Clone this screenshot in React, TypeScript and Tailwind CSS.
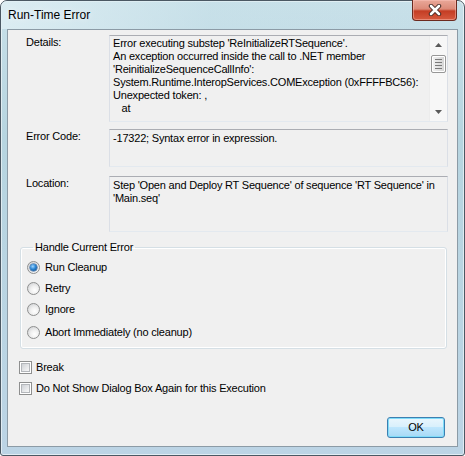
import React from 'react'

const ui = "font-['Liberation_Sans',Arial,sans-serif] text-[11px] leading-[13px] tracking-[-0.2px] text-black"

function Radio({ checked }: { checked?: boolean }): React.ReactElement {
  return (
    <span className="flex h-[13px] w-[13px] shrink-0 items-center justify-center rounded-full border border-[#8e8f8f] bg-[radial-gradient(circle_at_60%_65%,#ffffff_0%,#f0f0f0_40%,#c9cbce_100%)]">
      {checked && (
        <span className="h-[7px] w-[7px] rounded-full bg-[radial-gradient(circle_at_40%_35%,#9fd6ff_0%,#2a84d2_45%,#0d3f78_100%)] shadow-[0_0_0_0.5px_#1c4f8a]" />
      )}
    </span>
  )
}

function Checkbox(): React.ReactElement {
  return (
    <span className="flex h-[13px] w-[13px] shrink-0 items-center justify-center border border-[#8e8f8f] bg-white">
      <span className="h-[9px] w-[9px] border border-[#b4b7bb] bg-[linear-gradient(135deg,#cfd2d6_0%,#e8e9eb_60%,#f7f7f7_100%)]" />
    </span>
  )
}

function ScrollBar(): React.ReactElement {
  return (
    <div className="flex w-[18px] shrink-0 flex-col items-center border-l border-[#ececec] bg-[#f7f7f7] py-[6px]">
      {/* up arrow */}
      <svg width="7" height="4" viewBox="0 0 7 4" className="mt-[1px]">
        <polygon points="0,4 3.5,0 7,4" fill="#5a5a5a" />
      </svg>
      {/* thumb */}
      <div className="mt-[8px] flex h-[18px] w-[15px] flex-col items-center justify-center gap-[2px] rounded-[2px] border border-[#979797] bg-[linear-gradient(90deg,#f4f4f4,#e2e2e2_50%,#d4d4d4)] shadow-[inset_0_0_0_1px_#ffffff]">
        <span className="h-px w-[7px] bg-[#7a7a7a]" />
        <span className="h-px w-[7px] bg-[#7a7a7a]" />
        <span className="h-px w-[7px] bg-[#7a7a7a]" />
        <span className="h-px w-[7px] bg-[#7a7a7a]" />
      </div>
      <div className="flex-1" />
      {/* down arrow */}
      <svg width="7" height="4" viewBox="0 0 7 4" className="mb-[1px]">
        <polygon points="0,0 3.5,4 7,0" fill="#5a5a5a" />
      </svg>
    </div>
  )
}

function Field({
  label,
  height,
  top,
  scroll,
  children,
}: {
  label: string
  height: string
  top: string
  scroll?: boolean
  children: React.ReactNode
}): React.ReactElement {
  return (
    <div className={`flex pr-[9px] ${top}`}>
      <div className="w-[101px] shrink-0 pl-[18px] pt-[1px]">{label}</div>
      <div
        className={`flex flex-1 border border-[#abadb3] border-x-[#dbdfe6] border-b-[#e3e9ef] bg-[#f0f0f0] ${height}`}
      >
        <div className="flex-1 overflow-hidden pl-[3px] pt-[1px]">{children}</div>
        {scroll && <ScrollBar />}
      </div>
    </div>
  )
}

export default function App(): React.ReactElement {
  const options = [
    { label: 'Run Cleanup', checked: true, mt: 'mt-[7px]' },
    { label: 'Retry', checked: false, mt: 'mt-[8px]' },
    { label: 'Ignore', checked: false, mt: 'mt-[8px]' },
    { label: 'Abort Immediately (no cleanup)', checked: false, mt: 'mt-[10px]' },
  ]

  return (
    <div className="h-[456px] w-[465px] bg-white">
      {/* Window frame */}
      <div className="flex h-full w-full flex-col rounded-t-[7px] rounded-b-[3px] border border-[#4b5863] bg-[linear-gradient(180deg,#c8e0e9_0%,#b7d5e0_30%,#bcd4e5_100%)] px-[6px] pb-[8px] shadow-[inset_0_0_0_1px_rgba(255,255,255,0.55)]">
        {/* Title bar */}
        <div className="-mx-[6px] flex h-[28px] items-start justify-between rounded-t-[6px] bg-[linear-gradient(90deg,rgba(225,240,245,0.8)_0%,rgba(200,225,233,0.35)_45%,rgba(180,212,224,0)_100%)] pl-[7px] pr-[7px]">
          <span className="mt-[7px] font-['Liberation_Sans',Arial,sans-serif] text-[12px] leading-[15px] text-black [text-shadow:0_0_6px_rgba(255,255,255,0.9)]">
            Run-Time Error
          </span>
          <button className="-mt-px flex h-[21px] w-[45px] items-center justify-center rounded-b-[4px] border border-t-0 border-[#6b2a1f] bg-[linear-gradient(180deg,#e9a899_0%,#dc8a78_45%,#c43d24_55%,#d65a3f_100%)] shadow-[inset_0_0_0_1px_rgba(255,200,190,0.45)]">
            <svg width="14" height="12" viewBox="0 0 14 12">
              <path d="M3 2 L11 10 M11 2 L3 10" stroke="#3d2420" strokeWidth="4.4" strokeLinecap="round" />
              <path d="M3 2 L11 10 M11 2 L3 10" stroke="#ffffff" strokeWidth="2.6" strokeLinecap="round" />
            </svg>
          </button>
        </div>

        {/* Client area */}
        <div className={`flex flex-1 flex-col border border-[#8c9ba6] bg-[#f0f0f0] ${ui}`}>
          <Field label="Details:" height="h-[87px]" top="mt-[5px]" scroll>
            <div>Error executing substep 'ReInitializeRTSequence'.</div>
            <div>An exception occurred inside the call to .NET member</div>
            <div>'ReinitializeSequenceCallInfo':</div>
            <div>System.Runtime.InteropServices.COMException (0xFFFFBC56):</div>
            <div>Unexpected token: ,</div>
            <div>&nbsp;&nbsp;&nbsp;at</div>
          </Field>

          <Field label="Error Code:" height="h-[38px]" top="mt-[7px]">
            <div className="pt-[1px]">-17322; Syntax error in expression.</div>
          </Field>

          <Field label="Location:" height="h-[56px]" top="mt-[9px]">
            <div className="pt-[1px] pr-[2px]">
              Step 'Open and Deploy RT Sequence' of sequence 'RT Sequence' in 'Main.seq'
            </div>
          </Field>

          {/* Handle Current Error group */}
          <fieldset className="mt-[9px] ml-[12px] mr-[10px] rounded-[3px] border border-[#d5dfe5] pb-[9px] pl-[6px] shadow-[inset_0_0_0_1px_#ffffff]">
            <legend className="ml-[6px] px-[2px]">Handle Current Error</legend>
            {options.map((o) => (
              <label key={o.label} className={`flex h-[13px] items-center gap-[5px] ${o.mt}`}>
                <Radio checked={o.checked} />
                <span>{o.label}</span>
              </label>
            ))}
          </fieldset>

          {/* Checkboxes */}
          <label className="mt-[12px] ml-[11px] flex h-[13px] items-center gap-[4px]">
            <Checkbox />
            <span>Break</span>
          </label>
          <label className="mt-[8px] ml-[11px] flex h-[13px] items-center gap-[4px]">
            <Checkbox />
            <span>Do Not Show Dialog Box Again for this Execution</span>
          </label>

          {/* Buttons */}
          <div className="mt-[22px] flex justify-end pr-[12px]">
            <button className="flex h-[21px] w-[58px] items-center justify-center rounded-[3px] border border-[#3c7fb1] bg-[linear-gradient(180deg,#eaf6fd_0%,#d9f0fc_45%,#bee6fd_50%,#a7d9f5_100%)] shadow-[inset_0_0_0_1px_#7fdcf9]">
              OK
            </button>
          </div>
        </div>
      </div>
    </div>
  )
}
